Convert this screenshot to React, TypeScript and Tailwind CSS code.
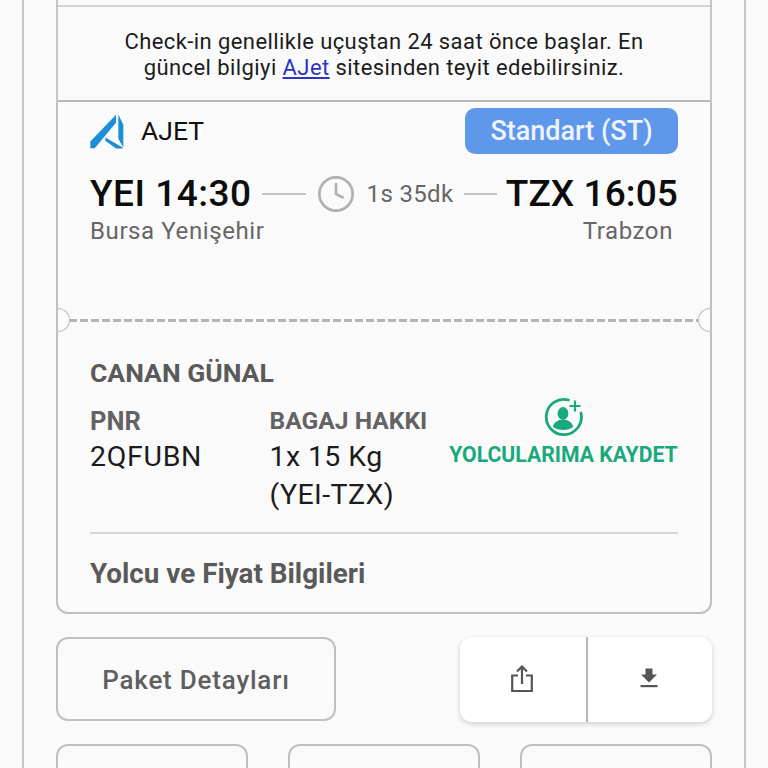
import { Clock } from 'lucide-react';

function AjetLogo() {
  return (
    <svg viewBox="28 26 102 104" className="h-[35px] w-[34px] shrink-0" fill="#1a8fd6">
      <path d="M106 28 L106 52 L42 128 L29 128 L29 108 Z" />
      <path d="M113 27 L128 58 L128 126 L113 100 Z" />
      <path d="M74 96 L126 126 L126 129 L106 129 L74 106 Z" />
    </svg>
  );
}

function AddPassengerIcon() {
  return (
    <svg viewBox="0 0 40 40" className="h-[40px] w-[40px]" fill="none">
      <path d="M24.5 3 A17.6 17.6 0 1 0 37 16" stroke="#1aa97c" strokeWidth="2.8" strokeLinecap="round" />
      <path d="M31 3.5 V14.5 M25.5 9 H36.5" stroke="#1aa97c" strokeWidth="2.2" />
      <ellipse cx="19" cy="16.5" rx="5.4" ry="6.4" fill="#1aa97c" />
      <path d="M9 30 C9.5 26 12 24.5 15.5 23 H22.5 C26 24.5 28.5 26 29 30 C26.5 32 23 33 19 33 C15 33 11.5 32 9 30 Z" fill="#1aa97c" />
    </svg>
  );
}

function ShareIcon() {
  return (
    <svg viewBox="0 0 24 28" className="h-[28px] w-[24px]" fill="none" stroke="#555555" strokeWidth="2.2">
      <path d="M12 19 V2 M7 6.5 L12 1.5 L17 6.5" />
      <path d="M8 10.5 H2.2 V26 H21.8 V10.5 H16" />
    </svg>
  );
}

function DownloadIcon() {
  return (
    <svg viewBox="0 0 18 20" className="h-[20px] w-[18px]" fill="#555555">
      <path d="M5.5 0.5 H12.5 V6.5 H17 L9 14.5 L1 6.5 H5.5 Z" />
      <rect x="0.5" y="17" width="17" height="2.2" />
    </svg>
  );
}

function Notch({ side }: { side: 'left' | 'right' }) {
  return (
    <div
      className={
        side === 'left'
          ? 'absolute left-0 top-[-11px] h-[24px] w-[12px] rounded-r-full border border-l-0 border-[#bdbdbd] bg-[#fafafa]'
          : 'absolute right-0 top-[-11px] h-[24px] w-[12px] rounded-l-full border border-r-0 border-[#bdbdbd] bg-[#fafafa]'
      }
    />
  );
}

export default function App() {
  return (
    <div className="h-[768px] w-[768px] overflow-hidden bg-[#fafafa] font-['Roboto',sans-serif]">
      <div className="mx-[22px] h-full w-[724px] border-x-2 border-[#c6c6c6] px-[32px]">
        <div className="border-x-2 border-[#c6c6c6]">
          <div className="h-[7px] border-b-2 border-[#d4d4d4]" />
          <div className="flex h-[95px] flex-col items-center justify-center border-b-2 border-[#b8b8b8] pt-[2px] text-center text-[22px] leading-[26px] tracking-[0.42px] text-[#1c1c1c]">
            <p>Check-in genellikle uçuştan 24 saat önce başlar. En</p>
            <p>
              güncel bilgiyi <span className="text-[#2b35c4] underline">AJet</span> sitesinden teyit edebilirsiniz.
            </p>
          </div>
        </div>

        <div className="h-[512px] rounded-b-[12px] border-x-2 border-b-2 border-[#c0c0c0]">
          <div className="h-[217px] px-[32px]">
            <div className="flex h-[52px] items-end justify-between">
              <div className="flex items-center gap-[17px] pb-[5px]">
                <AjetLogo />
                <span className="text-[26.5px] leading-[36px] font-normal text-[#111111]">AJET</span>
              </div>
              <div className="flex h-[46px] w-[213px] items-center justify-center rounded-[10px] bg-[#5f97ea] text-[27px] font-medium text-[#eef4fd]">
                Standart (ST)
              </div>
            </div>
            <div className="mt-[17px] flex h-[46px] items-center">
              <span className="text-[37px] leading-[46px] font-medium tracking-[0.5px] whitespace-nowrap text-[#0c0c0c]">YEI 14:30</span>
              <div className="ml-[10px] h-[2px] w-[44px] bg-[#c4c4c4]" />
              <Clock className="ml-[10px] h-[40px] w-[40px] text-[#b0b0b0]" strokeWidth={1.6} />
              <span className="ml-[11px] text-[24px] tracking-[0.35px] whitespace-nowrap text-[#666666]">1s 35dk</span>
              <div className="ml-[10px] h-[2px] w-[33px] bg-[#c4c4c4]" />
              <span className="ml-auto text-[37px] leading-[46px] font-medium tracking-[0.1px] whitespace-nowrap text-[#0c0c0c]">TZX 16:05</span>
            </div>
            <div className="mt-[-1px] flex justify-between pr-[5px] text-[24px] leading-[30px] tracking-[0.6px] text-[#666666]">
              <span>Bursa Yenişehir</span>
              <span>Trabzon</span>
            </div>
          </div>

          <div className="relative h-[3px] bg-[repeating-linear-gradient(90deg,#b4b4b4_0,#b4b4b4_8px,transparent_8px,transparent_11px)]">
            <Notch side="left" />
            <Notch side="right" />
          </div>

          <div className="px-[32px] pt-[34px]">
            <h2 className="text-[26.5px] leading-[34px] font-bold text-[#5a5a5a]">CANAN GÜNAL</h2>
            <div className="mt-[16px] flex h-[108px]">
              <div className="w-[180px]">
                <div className="text-[25.5px] leading-[30px] font-bold text-[#636363]">PNR</div>
                <div className="mt-[2px] text-[28.5px] leading-[38px] tracking-[0.7px] text-[#1c1c1c]">2QFUBN</div>
              </div>
              <div className="w-[180px]">
                <div className="text-[24.6px] leading-[30px] font-bold whitespace-nowrap text-[#636363]">BAGAJ HAKKI</div>
                <div className="mt-[2px] text-[28.5px] leading-[38px] tracking-[0.4px] text-[#1c1c1c]">
                  1x 15 Kg
                  <br />
                  (YEI-TZX)
                </div>
              </div>
              <div className="flex flex-1 flex-col items-end">
                <div className="-mt-[9px] flex w-[229px] flex-col items-center">
                  <AddPassengerIcon />
                  <span className="mt-[4px] text-[21.2px] leading-[28px] font-bold whitespace-nowrap text-[#1aa97c]">YOLCULARIMA KAYDET</span>
                </div>
              </div>
            </div>
            <div className="mt-[18px] border-t-2 border-[#d6d6d6] pt-[23px] text-[27.8px] leading-[34px] font-bold text-[#5a5a5a]">
              Yolcu ve Fiyat Bilgileri
            </div>
          </div>
        </div>

        <div className="mt-[23px] flex justify-between">
          <button className="h-[84px] w-[280px] rounded-[12px] border-2 border-[#c0c0c0] pt-[2px] text-[26px] font-medium tracking-[0.8px] text-[#5f5f5f]">
            Paket Detayları
          </button>
          <div className="flex h-[85px] w-[252px] rounded-[12px] bg-white shadow-[0_2px_5px_rgba(0,0,0,0.18)]">
            <div className="flex w-[128px] items-center justify-center border-r-2 border-[#b5b5b5] pr-[2px] pb-[1px]">
              <ShareIcon />
            </div>
            <div className="flex flex-1 items-center justify-center pr-[2px] pb-[3px]">
              <DownloadIcon />
            </div>
          </div>
        </div>

        <div className="mt-[22px] flex justify-between">
          <div className="h-[80px] w-[192px] rounded-[12px] border-2 border-[#c0c0c0]" />
          <div className="h-[80px] w-[192px] rounded-[12px] border-2 border-[#c0c0c0]" />
          <div className="h-[80px] w-[192px] rounded-[12px] border-2 border-[#c0c0c0]" />
        </div>
      </div>
    </div>
  );
}
